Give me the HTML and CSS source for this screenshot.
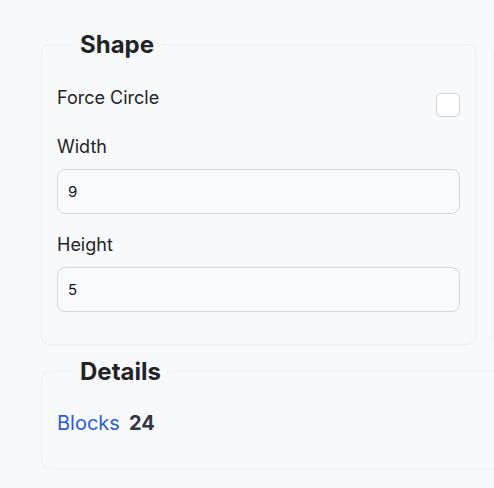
FILE: index.html
```html
<!DOCTYPE html>
<html lang="en">
<head>
<meta charset="utf-8">
<title>Shape settings</title>
<link rel="stylesheet" href="styles.css">
</head>
<body>
<div class="panel">
  <fieldset class="group">
    <legend>Shape</legend>
    <div class="check-row">
      <label for="force">Force Circle</label>
      <input id="force" class="check" type="checkbox">
    </div>
    <div class="field">
      <label for="w">Width</label>
      <input id="w" class="text-input" type="text" value="9">
    </div>
    <div class="field">
      <label for="h">Height</label>
      <input id="h" class="text-input" type="text" value="5">
    </div>
  </fieldset>
  <fieldset class="group side"></fieldset>
  <fieldset class="group details">
    <legend>Details</legend>
    <div class="stat">
      <span class="stat-name">Blocks</span>
      <span class="stat-value">24</span>
    </div>
  </fieldset>
</div>
</body>
</html>
```

FILE: styles.css
```css
html, body {
  margin: 0;
  background: #f8f9fb;
  overflow: hidden;
}
body {
  font-family: Inter, "Noto Sans", sans-serif;
  color: #1f2328;
  width: 494px;
  height: 488px;
}
.panel {
  display: grid;
  grid-template-columns: 435px 435px;
  column-gap: 17px;
  row-gap: 12px;
  padding: 30px 0 0 41px;
}
.group {
  margin: 0;
  border: 1px solid #eceef2;
  border-radius: 8px;
  padding: 25px 15px 32px;
  min-width: 0;
}
.group legend {
  margin-left: 15px;
  padding: 0 8px;
  font-size: 24px;
  font-weight: 700;
  line-height: 29px;
  color: #222428;
}
.side {
  margin-top: 14px;
}
.details {
  grid-column: 1 / span 2;
  padding: 22px 15px 30px;
}
.check-row {
  display: flex;
  justify-content: space-between;
  align-items: flex-start;
}
.check-row label,
.field label {
  font-size: 18px;
  line-height: 27px;
}
.check {
  appearance: none;
  -webkit-appearance: none;
  margin: 9px 0 0;
  width: 24px;
  height: 24px;
  border: 1px solid #cfd4da;
  border-radius: 5px;
  background: #ffffff;
}
.field {
  display: flex;
  flex-direction: column;
  margin-top: 16px;
}
.field + .field {
  margin-top: 17px;
}
.text-input {
  margin-top: 9px;
  box-sizing: border-box;
  height: 45px;
  width: 100%;
  border: 1px solid #d3d7dd;
  border-radius: 8px;
  background: #f9fafb;
  padding: 0 10px;
  font-family: Inter, "Noto Sans", sans-serif;
  font-size: 15px;
  color: #111418;
}
.stat {
  display: flex;
  gap: 9px;
  font-size: 20px;
  line-height: 30px;
}
.stat-name {
  color: #2e5bd8;
}
.stat-value {
  font-weight: 700;
  color: #323745;
}
```
